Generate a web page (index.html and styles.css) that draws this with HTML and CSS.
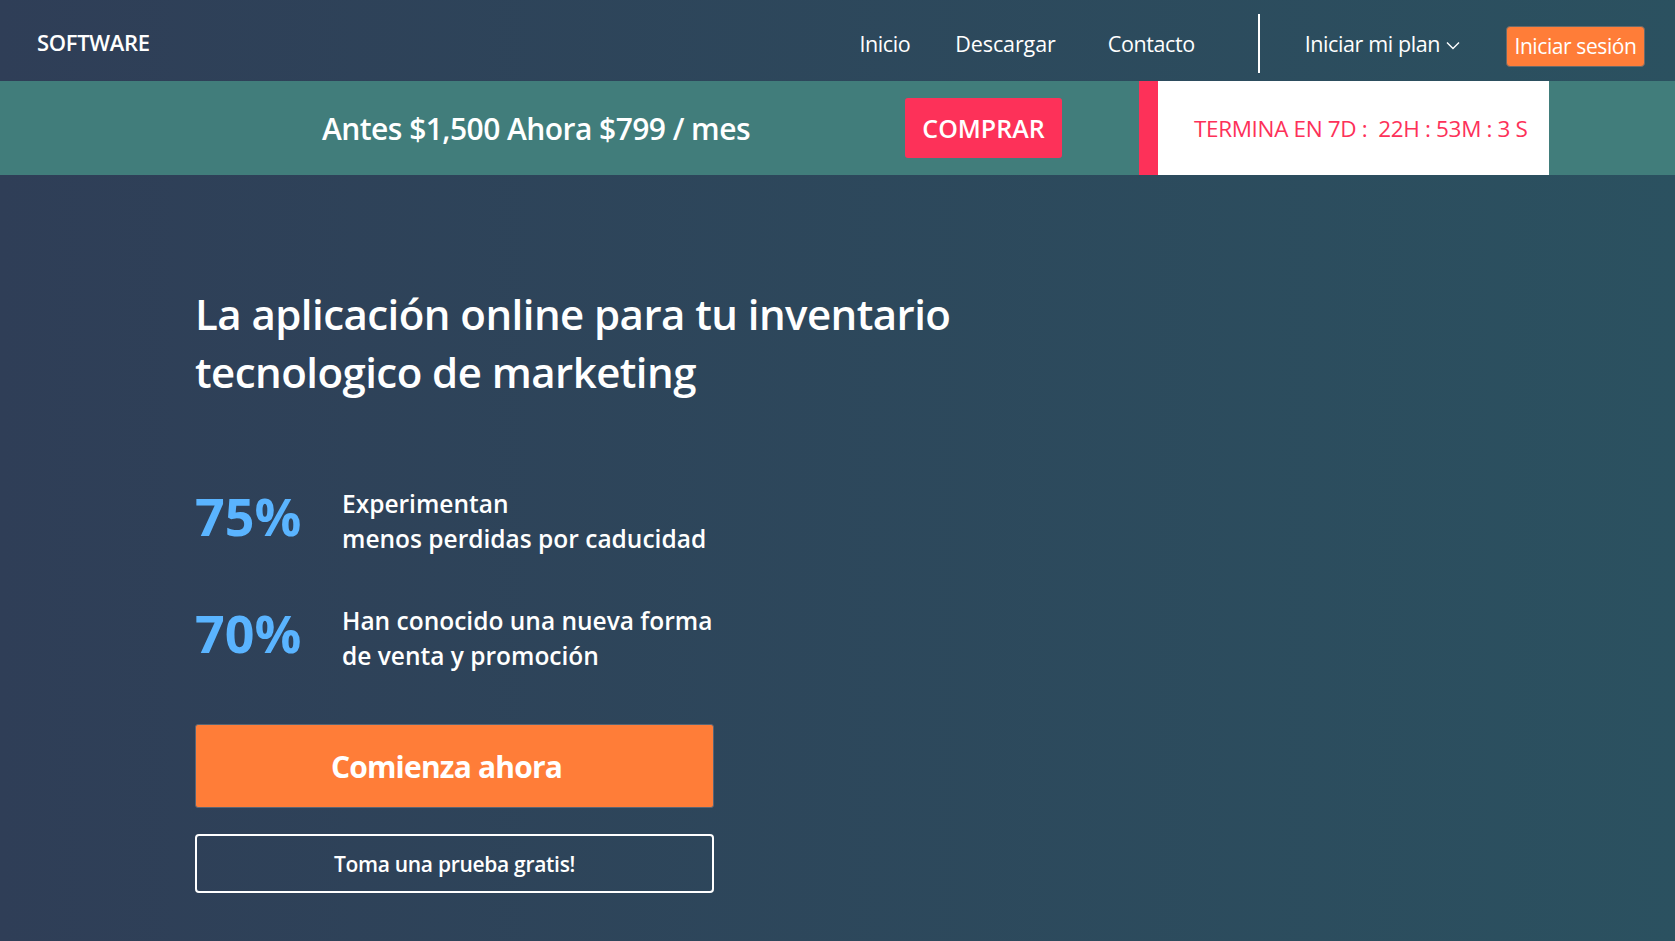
FILE: index.html
```html
<!DOCTYPE html>
<html lang="es">
<head>
<meta charset="utf-8">
<title>Software</title>
<link rel="stylesheet" href="styles.css">
</head>
<body>
<div class="page">
  <header class="topbar">
    <div class="logo">SOFTWARE</div>
    <nav class="nav">
      <a class="nav-link nav-inicio" href="#">Inicio</a>
      <a class="nav-link nav-descargar" href="#">Descargar</a>
      <a class="nav-link nav-contacto" href="#">Contacto</a>
      <span class="nav-divider"></span>
      <a class="nav-link nav-plan" href="#">Iniciar mi plan
        <svg class="chevron" width="14" height="9" viewBox="0 0 14 9"><path d="M1 1.5 L7 7.5 L13 1.5" fill="none" stroke="#fff" stroke-width="1.4"/></svg>
      </a>
      <a class="login-btn" href="#">Iniciar sesión</a>
    </nav>
  </header>

  <section class="promo">
    <div class="promo-price">Antes $1,500 Ahora $799 / mes</div>
    <a class="buy-btn" href="#">COMPRAR</a>
    <div class="countdown">TERMINA EN 7D :&nbsp; 22H : 53M : 3 S</div>
  </section>

  <main class="hero">
    <h1 class="hero-title">La aplicación online para tu inventario<br>tecnologico de marketing</h1>

    <div class="stats">
      <div class="stat">
        <div class="stat-num">75%</div>
        <div class="stat-text">Experimentan<br>menos perdidas por caducidad</div>
      </div>
      <div class="stat">
        <div class="stat-num">70%</div>
        <div class="stat-text">Han conocido una nueva forma<br>de venta y promoción</div>
      </div>
    </div>

    <div class="actions">
      <a class="cta-primary" href="#">Comienza ahora</a>
      <a class="cta-secondary" href="#">Toma una prueba gratis!</a>
    </div>
  </main>
</div>
</body>
</html>
```

FILE: styles.css
```css
* { box-sizing: border-box; }

html, body {
  margin: 0;
  padding: 0;
}

body {
  font-family: "Open Sans", "Noto Sans", sans-serif;
  color: #fff;
  background: linear-gradient(to right, #2f3e57 0%, #2b5160 100%);
  min-height: 941px;
}

a { color: inherit; text-decoration: none; }

.page {
  min-height: 941px;
}

/* Top bar */
.topbar {
  height: 81px;
  display: flex;
  align-items: center;
  justify-content: space-between;
  padding: 0 30px 0 37px;
}

.logo {
  font-size: 22px;
  font-weight: 600;
  letter-spacing: -0.3px;
  margin-top: 2px;
}

.nav {
  display: flex;
  align-items: center;
  height: 100%;
}

.nav-link {
  font-size: 21.5px;
  font-weight: 400;
  letter-spacing: -0.4px;
  display: flex;
  align-items: center;
  margin-top: 6px;
}

.nav-descargar { margin-left: 45px; letter-spacing: -0.1px; }
.nav-contacto { margin-left: 52px; }

.nav-divider {
  width: 2px;
  height: 59px;
  background: #fff;
  margin: 6px 45px 0 63px;
}

.chevron { margin-left: 6px; margin-top: 4px; }

.login-btn {
  margin-left: 46px;
  margin-top: 11px;
  background: #ff7d38;
  border: 1px solid #6b6a6a;
  border-radius: 4px;
  height: 41px;
  width: 139px;
  display: flex;
  align-items: center;
  justify-content: center;
  font-size: 21px;
  letter-spacing: -0.4px;
}

/* Promo banner */
.promo {
  height: 94px;
  background: #417d7b;
  display: flex;
  align-items: center;
  padding-left: 322px;
}

.promo-price {
  font-size: 30px;
  font-weight: 600;
  letter-spacing: -0.55px;
  width: 583px;
}

.buy-btn {
  width: 157px;
  height: 60px;
  background: #fd3159;
  border-radius: 3px;
  display: flex;
  align-items: center;
  justify-content: center;
  font-size: 25px;
  font-weight: 600;
  letter-spacing: 0;
  margin-right: 77px;
}

.countdown {
  align-self: stretch;
  width: 410px;
  background: #fff;
  border-left: 19px solid #fd3159;
  color: #fd3159;
  display: flex;
  align-items: center;
  padding-left: 36px;
  font-size: 22.5px;
  font-weight: 500;
  letter-spacing: -0.35px;
  white-space: nowrap;
}

/* Hero */
.hero {
  padding: 110px 0 0 195px;
}

.hero-title {
  margin: 0;
  font-size: 42px;
  line-height: 58px;
  font-weight: 600;
  letter-spacing: -0.55px;
}

.stats {
  margin-top: 85px;
  display: flex;
  flex-direction: column;
  gap: 47px;
}

.stat {
  display: flex;
  align-items: center;
}

.stat-num {
  width: 147px;
  font-size: 52px;
  font-weight: 700;
  color: #5ab4ff;
  letter-spacing: 0;
  line-height: 1;
  margin-bottom: 10px;
}

.stat-text {
  font-size: 24.5px;
  font-weight: 600;
  line-height: 35px;
  letter-spacing: 0;
}

.actions {
  margin-top: 51px;
  display: flex;
  flex-direction: column;
  gap: 26px;
  width: 519px;
}

.cta-primary {
  height: 84px;
  background: #ff7d38;
  border: 1px solid #5a6574;
  border-radius: 3px;
  display: flex;
  align-items: center;
  justify-content: center;
  padding-right: 16px;
  font-size: 30px;
  font-weight: 700;
  letter-spacing: -0.8px;
}

.cta-secondary {
  height: 59px;
  border: 2px solid #fff;
  border-radius: 4px;
  display: flex;
  align-items: center;
  justify-content: center;
  font-size: 21px;
  font-weight: 600;
  letter-spacing: -0.3px;
}
```
